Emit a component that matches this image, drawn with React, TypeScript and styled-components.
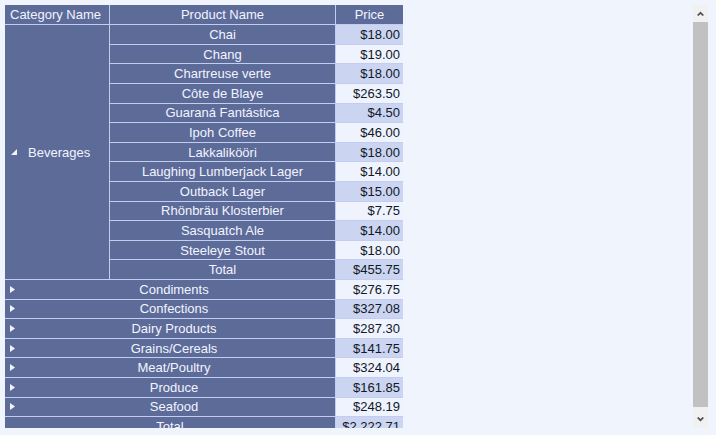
import styled, { createGlobalStyle } from "styled-components";

const GlobalStyle = createGlobalStyle`
  html, body {
    margin: 0;
    padding: 0;
    background: #f0f4fd;
  }
  body {
    font-family: "Liberation Sans", Arial, sans-serif;
    font-size: 13px;
  }
`;

type Product = { name: string; price: string };
type Category = { name: string; total: string; products?: Product[] };

const categories: Category[] = [
  {
    name: "Beverages",
    total: "$455.75",
    products: [
      { name: "Chai", price: "$18.00" },
      { name: "Chang", price: "$19.00" },
      { name: "Chartreuse verte", price: "$18.00" },
      { name: "Côte de Blaye", price: "$263.50" },
      { name: "Guaraná Fantástica", price: "$4.50" },
      { name: "Ipoh Coffee", price: "$46.00" },
      { name: "Lakkalikööri", price: "$18.00" },
      { name: "Laughing Lumberjack Lager", price: "$14.00" },
      { name: "Outback Lager", price: "$15.00" },
      { name: "Rhönbräu Klosterbier", price: "$7.75" },
      { name: "Sasquatch Ale", price: "$14.00" },
      { name: "Steeleye Stout", price: "$18.00" },
    ],
  },
  { name: "Condiments", total: "$276.75" },
  { name: "Confections", total: "$327.08" },
  { name: "Dairy Products", total: "$287.30" },
  { name: "Grains/Cereals", total: "$141.75" },
  { name: "Meat/Poultry", total: "$324.04" },
  { name: "Produce", total: "$161.85" },
  { name: "Seafood", total: "$248.19" },
];

const Frame = styled.div`
  display: flex;
  margin: 5px 8px 0 5px;
  height: 423px;
`;

const Viewport = styled.div`
  flex: 1;
  overflow: hidden;
`;

const Grid = styled.div`
  display: grid;
  grid-template-columns: 104px 225px 67px;
  grid-template-rows: 19.3px;
  grid-auto-rows: 18.6px;
  gap: 1px;
  width: 398px;
  background: #c3cdef;
`;

const HeadCell = styled.div<{ $left?: boolean }>`
  background: #5d6b99;
  color: #f2f4ff;
  display: flex;
  align-items: center;
  justify-content: ${(p) => (p.$left ? "flex-start" : "center")};
  padding-left: ${(p) => (p.$left ? "5px" : "0")};
  white-space: nowrap;
`;

const NameCell = styled.div<{ $span?: number }>`
  background: #5d6b99;
  color: #f2f4ff;
  display: flex;
  align-items: center;
  justify-content: center;
  white-space: nowrap;
  grid-column: ${(p) => (p.$span ? `span ${p.$span}` : "auto")};
`;

const GroupCell = styled.div<{ $rows: number }>`
  background: #5d6b99;
  color: #f2f4ff;
  display: flex;
  align-items: center;
  padding-left: 6px;
  grid-row: span ${(p) => p.$rows};
`;

const CollapsedCell = styled.div`
  background: #5d6b99;
  color: #f2f4ff;
  display: flex;
  align-items: center;
  padding-left: 5px;
  grid-column: span 2;
`;

const CollapsedLabel = styled.span`
  flex: 1;
  text-align: center;
  padding-right: 2px;
`;

const GroupLabel = styled.span`
  margin-left: 11px;
`;

const PriceCell = styled.div<{ $alt: boolean }>`
  background: ${(p) => (p.$alt ? "#cbd5f1" : "#eff3fd")};
  color: #111827;
  display: flex;
  align-items: center;
  justify-content: flex-end;
  padding-right: 3px;
`;

const ScrollBar = styled.div`
  width: 15px;
  display: flex;
  flex-direction: column;
  background: #f1f1f1;
`;

const ScrollButton = styled.div`
  height: 17px;
  display: flex;
  align-items: center;
  justify-content: center;
`;

const Thumb = styled.div`
  flex: 1;
  background: #c1c1c1;
  margin-bottom: 4px;
`;

const Chevron = ({ up }: { up?: boolean }) => (
  <svg width="7" height="5" viewBox="0 0 7 5">
    <path
      d={up ? "M0 4 L3.5 0.5 L7 4 L5.6 5 L3.5 2.9 L1.4 5 Z" : "M0 1 L3.5 4.5 L7 1 L5.6 0 L3.5 2.1 L1.4 0 Z"}
      fill="#505050"
    />
  </svg>
);

const ExpandedIcon = () => (
  <svg width="6" height="6" viewBox="0 0 6 6">
    <path d="M6 0 L6 6 L0 6 Z" fill="#f2f4ff" />
  </svg>
);

const CollapsedIcon = () => (
  <svg width="5" height="7" viewBox="0 0 5 7">
    <path d="M0 0 L5 3.5 L0 7 Z" fill="#f2f4ff" />
  </svg>
);

export default function App() {
  let row = 0;
  const nextAlt = () => row++ % 2 === 0;

  return (
    <>
      <GlobalStyle />
      <Frame>
        <Viewport>
          <Grid>
            <HeadCell $left>Category Name</HeadCell>
            <HeadCell>Product Name</HeadCell>
            <HeadCell>Price</HeadCell>
            {categories.map((cat) =>
              cat.products ? (
                [
                  <GroupCell key={cat.name} $rows={cat.products.length + 1}>
                    <ExpandedIcon />
                    <GroupLabel>{cat.name}</GroupLabel>
                  </GroupCell>,
                  ...cat.products.flatMap((p) => [
                    <NameCell key={p.name}>{p.name}</NameCell>,
                    <PriceCell key={p.name + "-price"} $alt={nextAlt()}>
                      {p.price}
                    </PriceCell>,
                  ]),
                  <NameCell key={cat.name + "-total"}>Total</NameCell>,
                  <PriceCell key={cat.name + "-total-price"} $alt={nextAlt()}>
                    {cat.total}
                  </PriceCell>,
                ]
              ) : (
                [
                  <CollapsedCell key={cat.name}>
                    <CollapsedIcon />
                    <CollapsedLabel>{cat.name}</CollapsedLabel>
                  </CollapsedCell>,
                  <PriceCell key={cat.name + "-price"} $alt={nextAlt()}>
                    {cat.total}
                  </PriceCell>,
                ]
              )
            )}
            <NameCell $span={2}>Total</NameCell>
            <PriceCell $alt={nextAlt()}>$2,222.71</PriceCell>
          </Grid>
        </Viewport>
        <ScrollBar>
          <ScrollButton>
            <Chevron up />
          </ScrollButton>
          <Thumb />
          <ScrollButton>
            <Chevron />
          </ScrollButton>
        </ScrollBar>
      </Frame>
    </>
  );
}
